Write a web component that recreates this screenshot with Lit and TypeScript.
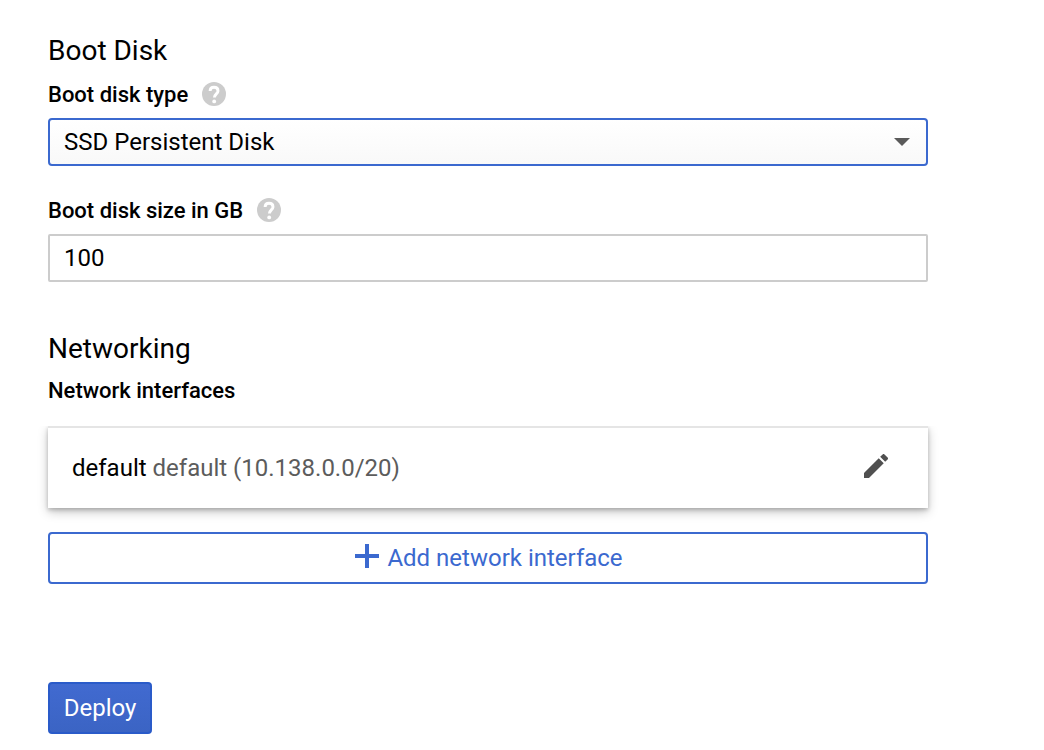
import { LitElement, html, css } from "lit";
import { customElement, property, state } from "lit/decorators.js";

@customElement("help-icon")
export class HelpIcon extends LitElement {
  static styles = css`
    :host {
      display: block;
      width: 24px;
      height: 24px;
    }
    .glyph {
      display: block;
      width: 24px;
      height: 24px;
    }
  `;

  render() {
    return html`
      <svg class="glyph" viewBox="0 0 24 24" aria-hidden="true">
        <circle cx="12" cy="12" r="12" fill="#ccc" />
        <path
          d="M8.1 9C8.1 6.7 9.7 5.3 12 5.3s4 1.4 4 3.6c0 2.9-3.6 3.1-3.6 6.7"
          fill="none"
          stroke="#fff"
          stroke-width="2.9"
        />
        <circle cx="12.2" cy="19.4" r="1.9" fill="#fff" />
      </svg>
    `;
  }
}

@customElement("network-card")
export class NetworkCard extends LitElement {
  @property() name = "";
  @property() detail = "";

  static styles = css`
    :host {
      display: block;
    }
    .card {
      display: flex;
      align-items: center;
      justify-content: space-between;
      box-sizing: border-box;
      min-height: 82px;
      padding: 0 40px 0 24px;
      border-top: 2px solid #e5e5e5;
      background: #fff;
      box-shadow:
        0 4px 10px rgba(0, 0, 0, 0.22),
        0 2px 4px rgba(0, 0, 0, 0.2);
      clip-path: inset(0 -16px -20px -16px);
    }
    .text {
      line-height: 32px;
    }
    .detail {
      color: #5c5c5c;
    }
    .edit {
      padding: 0;
      border: 0;
      background: none;
      cursor: pointer;
    }
    .pencil {
      display: block;
      width: 24px;
      height: 24px;
      margin-bottom: 4px;
    }
  `;

  render() {
    return html`
      <div class="card">
        <div class="text">${this.name} <span class="detail">${this.detail}</span></div>
        <button class="edit" type="button" aria-label="Edit network interface">
          <svg class="pencil" viewBox="3 3 18 18" fill="#505050" aria-hidden="true">
            <path
              d="M3 17.25V21h3.75L17.81 9.94l-3.75-3.75L3 17.25zM20.71 7.04a1 1 0 0 0 0-1.41l-2.34-2.34a1 1 0 0 0-1.41 0l-1.83 1.83 3.75 3.75 1.83-1.83z"
            />
          </svg>
        </button>
      </div>
    `;
  }
}

@customElement("app-root")
export class AppRoot extends LitElement {
  @state() private interfaces = [{ name: "default", detail: "default (10.138.0.0/20)" }];

  static styles = css`
    :host {
      display: block;
      background: #fff;
      color: #000;
      font: 400 24px/32px Roboto, Arial, sans-serif;
    }
    .form {
      box-sizing: border-box;
      max-width: 976px;
      padding: 32px 48px 16px;
    }
    .title {
      margin: 0 0 10px;
      font-size: 28px;
      font-weight: 400;
      line-height: 38px;
    }
    .field {
      margin-bottom: 30px;
    }
    .field-head {
      display: flex;
      align-items: flex-end;
      gap: 14px;
      height: 28px;
      margin-bottom: 10px;
    }
    .help {
      margin-bottom: 2px;
    }
    .label {
      margin: 0;
      font-size: 22px;
      font-weight: 500;
      line-height: 26px;
    }
    .control {
      display: block;
      box-sizing: border-box;
      width: 100%;
      height: 48px;
      margin: 0;
      padding: 0 14px;
      border: 2px solid #ccc;
      border-radius: 2px;
      outline: 0;
      background: #fff;
      color: #000;
      font: inherit;
    }
    .select-wrap {
      display: grid;
      align-items: center;
    }
    .select-wrap > * {
      grid-area: 1 / 1;
    }
    .select {
      appearance: none;
      border-color: #3b69cf;
      border-radius: 4px;
      background: linear-gradient(#fff, #f9f9f9);
    }
    .arrow {
      justify-self: end;
      width: 16px;
      height: 8px;
      margin-right: 18px;
      pointer-events: none;
    }
    .networking {
      margin-top: 48px;
    }
    .card {
      margin: 22px 0 24px;
    }
    .button {
      display: flex;
      align-items: center;
      justify-content: center;
      box-sizing: border-box;
      height: 52px;
      padding: 0 14px;
      border: 2px solid #3b69cf;
      border-radius: 4px;
      font: inherit;
      cursor: pointer;
    }
    .add {
      gap: 8px;
      width: 100%;
      padding-left: 16px;
      background: #fff;
      color: #3b69cf;
    }
    .plus {
      width: 24px;
      height: 24px;
      margin-bottom: 4px;
    }
    .deploy {
      width: 104px;
      margin-top: 98px;
      border-color: #2a5bc9;
      background: linear-gradient(#416ad0, #3b64c4);
      color: #fff;
    }
  `;

  render() {
    return html`
      <form class="form" @submit=${(e: Event) => e.preventDefault()}>
        <section>
          <h2 class="title">Boot Disk</h2>
          <div class="field">
            <div class="field-head">
              <label class="label" for="disk-type">Boot disk type</label>
              <help-icon class="help"></help-icon>
            </div>
            <div class="select-wrap">
              <select class="control select" id="disk-type">
                <option>SSD Persistent Disk</option>
              </select>
              <svg class="arrow" viewBox="0 0 16 8" aria-hidden="true">
                <path d="M0 0h16L8 8z" fill="#5a5a5a" />
              </svg>
            </div>
          </div>
          <div class="field">
            <div class="field-head">
              <label class="label" for="disk-size">Boot disk size in GB</label>
              <help-icon class="help"></help-icon>
            </div>
            <input class="control" id="disk-size" type="text" inputmode="numeric" value="100" />
          </div>
        </section>
        <section class="networking">
          <h2 class="title">Networking</h2>
          <h3 class="label">Network interfaces</h3>
          ${this.interfaces.map(
            (n) => html`<network-card class="card" .name=${n.name} .detail=${n.detail}></network-card>`
          )}
          <button class="button add" type="button">
            <svg class="plus" viewBox="0 0 24 24" aria-hidden="true">
              <path d="M10 0h4v10h10v4H14v10h-4V14H0v-4h10z" fill="#3b69cf" />
            </svg>
            Add network interface
          </button>
        </section>
        <button class="button deploy" type="submit">Deploy</button>
      </form>
    `;
  }
}
